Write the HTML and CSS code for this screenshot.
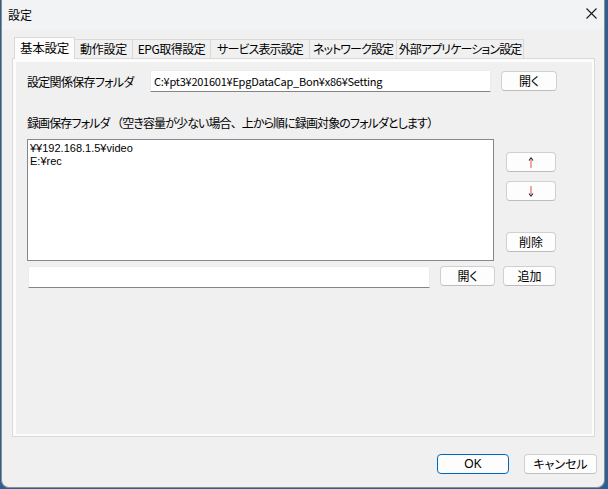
FILE: index.html
```html
<!DOCTYPE html>
<html lang="ja">
<head>
<meta charset="utf-8">
<title>設定</title>
<link rel="stylesheet" href="styles.css">
</head>
<body>
<div class="window">
  <div class="titlebar">
    <span class="title">設定</span>
    <svg class="close" width="11" height="11" viewBox="0 0 11 11"><path d="M0.5 0.5 L10.5 10.5 M10.5 0.5 L0.5 10.5" stroke="#1a1a1a" stroke-width="1.1" fill="none"/></svg>
  </div>
  <div class="tabs">
    <div class="tab active">基本設定</div>
    <div class="tab t2">動作設定</div>
    <div class="tab t3">EPG取得設定</div>
    <div class="tab t4">サービス表示設定</div>
    <div class="tab t5">ネットワーク設定</div>
    <div class="tab t6">外部アプリケーション設定</div>
  </div>
  <div class="panel">
    <div class="page">
      <div class="row1">
        <span class="label1">設定関係保存フォルダ</span>
        <div class="input input-top">C:¥pt3¥201601¥EpgDataCap_Bon¥x86¥Setting</div>
        <button class="btn btn-open1">開く</button>
      </div>
      <div class="label2">録画保存フォルダ <span class="fw">（</span>空き容量が少ない場合<span class="fw">、</span>上から順に録画対象のフォルダとします<span class="fw">）</span></div>
      <div class="row3">
        <div class="listbox">
          <div class="item">¥¥192.168.1.5¥video</div>
          <div class="item">E:¥rec</div>
        </div>
        <div class="sidebtns">
          <button class="btn btn-side btn-up"><svg width="6" height="11" viewBox="0 0 6 11"><path d="M3 3 V11" stroke="#e86a6a" stroke-width="1.2"/><path d="M1 3.5 L3 1 L5 3.5" stroke="#222" stroke-width="1.1" fill="none"/></svg></button>
          <button class="btn btn-side btn-down"><svg width="6" height="11" viewBox="0 0 6 11"><path d="M3 0 V8" stroke="#e86a6a" stroke-width="1.2"/><path d="M1 7.5 L3 10 L5 7.5" stroke="#222" stroke-width="1.1" fill="none"/></svg></button>
          <button class="btn btn-side btn-del">削除</button>
        </div>
      </div>
      <div class="row4">
        <div class="input input-bottom"></div>
        <button class="btn btn-open2">開く</button>
        <button class="btn btn-add">追加</button>
      </div>
    </div>
  </div>
  <div class="footer">
    <button class="btn btn-ok">OK</button>
    <button class="btn btn-cancel">キャンセル</button>
  </div>
</div>
</body>
</html>
```
FILE: styles.css
```css
* { box-sizing: border-box; }
html, body { margin: 0; padding: 0; }
body {
  width: 608px;
  height: 489px;
  background: #2d5f94;
  font-family: "Noto Sans CJK JP", "Noto Sans", sans-serif;
  font-feature-settings: "palt";
  font-size: 12px;
  color: #000;
  overflow: hidden;
}
.window {
  margin-left: 1px;
  width: 604px;
  height: 488px;
  background: #f0f0f0;
  border: 1px solid #8d8d8d;
  border-top: none;
  border-radius: 0 0 8px 8px;
  display: flex;
  flex-direction: column;
}
.titlebar {
  height: 30px;
  background: #f2f3f5;
  display: flex;
  align-items: center;
  justify-content: space-between;
  padding: 0 7px 1px 6px;
}
.title { font-size: 12px; line-height: 14px; }
.close { margin-top: -2px; }
.tabs {
  display: flex;
  align-items: flex-end;
  height: 28px;
  padding-left: 12px;
  position: relative;
  z-index: 1;
}
.tab {
  height: 19px;
  border: 1px solid #d9d9d9;
  border-bottom: none;
  border-left: none;
  background: #f0f0f0;
  font-size: 12px;
  letter-spacing: -0.9px;
  line-height: 18px;
  display: flex;
  justify-content: center;
  white-space: nowrap;
}
.tab.active {
  height: 22px;
  width: 61px;
  border-left: 1px solid #d9d9d9;
  background: #fcfcfc;
  margin-bottom: -1px;
  line-height: 20px;
  font-size: 12.5px;
  letter-spacing: -0.3px;
}
.t2 { width: 58px; letter-spacing: -0.3px; }
.t3 { width: 78px; letter-spacing: -0.5px; }
.t4 { width: 99px; }
.t5 { width: 87px; }
.t6 { width: 127px; }
.panel {
  margin: 0 9px 0 10px;
  height: 379px;
  border: 1px solid #d9d9d9;
  background: #fcfcfc;
  padding: 3px 2px 2px 3px;
}
.page {
  height: 100%;
  background: #f0f0f0;
  padding: 8px 0 0 11px;
}
.row1 {
  display: flex;
  align-items: center;
  height: 22px;
}
.label1 {
  width: 123px;
  font-size: 12px;
  letter-spacing: -0.7px;
  white-space: nowrap;
}
.input {
  background: #fff;
  border: 1px solid #ececec;
  border-bottom: 1px solid #858585;
  border-radius: 2px 2px 0 0;
  font-size: 11px;
  letter-spacing: -0.25px;
  line-height: 20px;
  padding-left: 3px;
  white-space: nowrap;
}
.input-top { width: 341px; height: 22px; }
.btn {
  font-family: inherit;
  font-feature-settings: "palt";
  font-size: 12px;
  color: #000;
  background: #fdfdfd;
  border: 1px solid #d0d0d0;
  border-bottom-color: #bdbdbd;
  border-radius: 4px;
  padding: 0;
  height: 20px;
  line-height: 18px;
  display: flex;
  align-items: center;
  justify-content: center;
}
.btn-open1 { width: 56px; margin-left: 10px; }
.label2 {
  margin-top: 22px;
  height: 18px;
  line-height: 18px;
  font-size: 12px;
  letter-spacing: -0.9px;
  white-space: nowrap;
}
.fw { font-feature-settings: normal; }
.row3 {
  display: flex;
  margin-top: 7px;
}
.listbox {
  width: 467px;
  height: 122px;
  background: #fff;
  border: 1px solid #828790;
  padding: 2px 0 0 2px;
  font-family: "Liberation Sans", "Noto Sans CJK JP", sans-serif;
  font-size: 11px;
  line-height: 13px;
}
.item { white-space: nowrap; height: 13px; }
.sidebtns {
  display: flex;
  flex-direction: column;
  margin-left: 12px;
}
.btn-side { width: 50px; }
.btn-up { margin-top: 13px; }
.btn-down { margin-top: 9px; }
.btn-del { margin-top: 31px; }
.row4 {
  display: flex;
  margin-top: 5px;
  align-items: flex-start;
}
.input-bottom { width: 402px; height: 22px; margin-left: 1px; }
.btn-open2 { width: 55px; margin-left: 10px; }
.btn-add { width: 53px; margin-left: 8px; }
.footer {
  display: flex;
  justify-content: flex-end;
  padding: 17px 7px 0 0;
}
.btn-ok {
  width: 72px;
  border: 1px solid #0067c0;
  font-family: "Liberation Sans", "Noto Sans CJK JP", sans-serif;
}
.btn-cancel { width: 73px; margin-left: 15px; }
```
